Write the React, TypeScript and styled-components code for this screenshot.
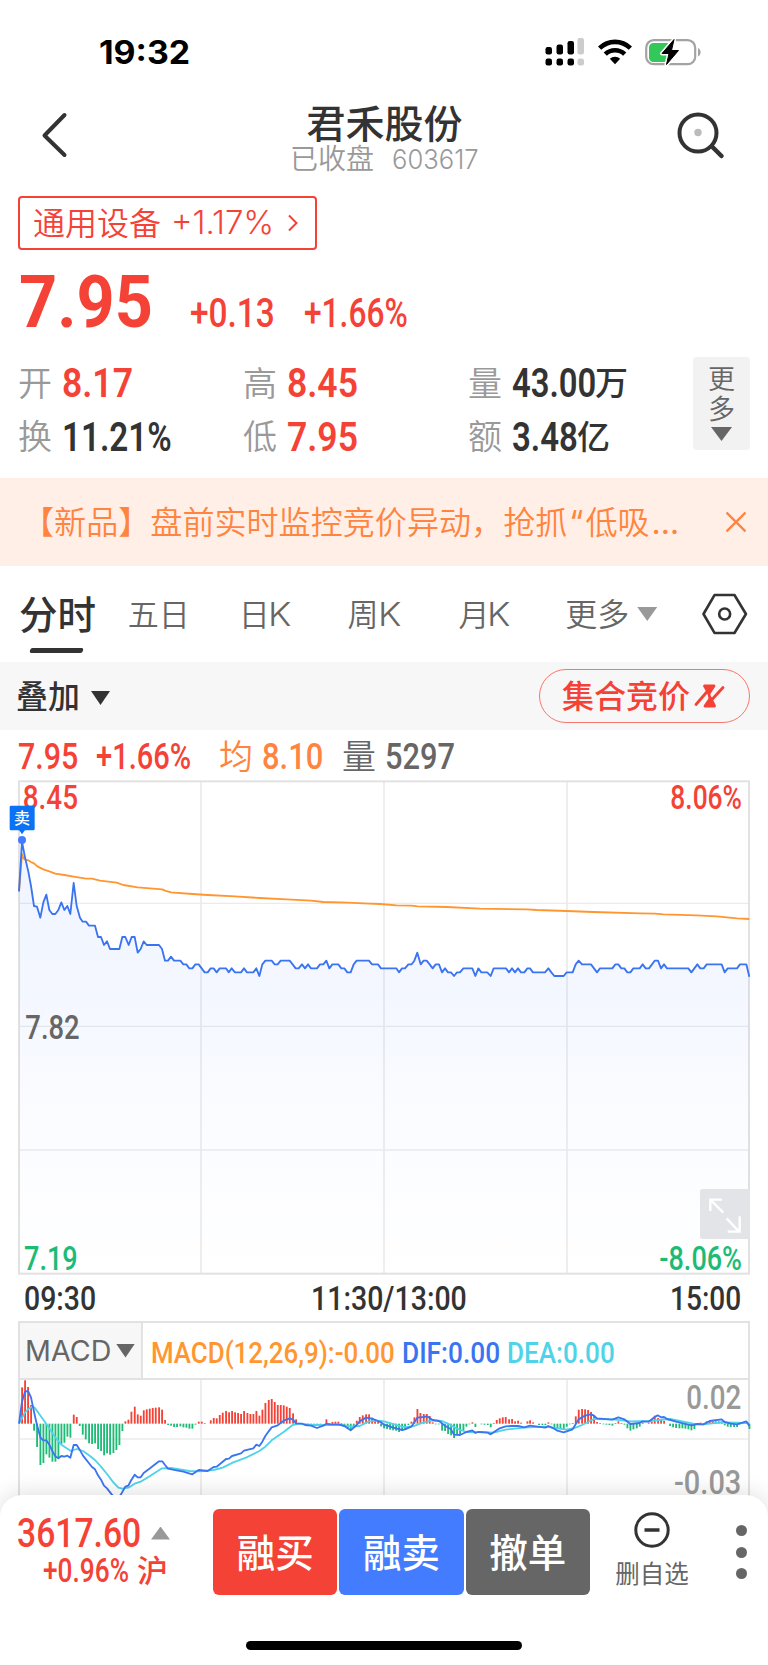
import React, { useLayoutEffect, useRef, useState } from 'react';
import styled, { createGlobalStyle } from 'styled-components';

const RED = '#f54236';
const INK = '#333333';
const GREY = '#999999';
const MID = '#666666';
const BLUE = '#3a74f0';
const ORANGE = '#ff9630';
const CYAN = '#4fd3e8';
const GREEN = '#1dbb75';
const DIN = 'Roboto, "Liberation Sans", sans-serif';
const SYSTEM = 'Inter, "Liberation Sans", sans-serif';
const HAN = '"Noto Sans CJK SC", sans-serif';

const GlobalStyle = createGlobalStyle`
  * { box-sizing: border-box; }
  body { margin: 0; background: #fff; font-family: ${HAN}; }
`;

const Page = styled.div`
  width: 768px;
  height: 1665px;
  overflow: hidden;
  background: #fff;
  display: flex;
  flex-direction: column;
  & > * { flex-shrink: 0; }
`;

/* ---------- text pieces ---------- */

const Han = styled.span<{ $size: number; $color?: string; $weight?: number; $ml?: number }>`
  flex: none;
  font: ${p => p.$weight ?? 400} ${p => p.$size}px/1 ${HAN};
  color: ${p => p.$color ?? INK};
  margin-left: ${p => p.$ml ?? 0}px;
  padding-bottom: 0.11em;
  white-space: nowrap;
`;

const FitBox = styled.span<{ $w: number; $size: number; $color: string; $weight: number; $ml: number; $font: string }>`
  flex: none;
  display: block;
  width: ${p => p.$w}px;
  margin-left: ${p => p.$ml}px;
  font: ${p => p.$weight} ${p => p.$size}px/1 ${p => p.$font};
  color: ${p => p.$color};
  white-space: nowrap;
`;

const FitText = styled.span`
  display: inline-block;
  transform-origin: 0 50%;
`;

type FitProps = { children: string; w: number; size: number; color?: string; weight?: number; ml?: number; font?: string };

/** Condenses a run of figures to the given width. */
function Fit({ children, w, size, color = RED, weight = 500, ml = 0, font = DIN }: FitProps) {
  const ref = useRef<HTMLSpanElement>(null);
  const [scale, setScale] = useState(1);
  useLayoutEffect(() => {
    if (ref.current) setScale(w / ref.current.offsetWidth);
  }, [w, children]);
  return (
    <FitBox $w={w} $size={size} $color={color} $weight={weight} $ml={ml} $font={font}>
      <FitText ref={ref} style={{ transform: `scaleX(${scale})` }}>{children}</FitText>
    </FitBox>
  );
}

const Triangle = styled.i<{ $w: number; $h: number; $color: string; $up?: boolean; $ml?: number }>`
  flex: none;
  width: ${p => p.$w}px;
  height: ${p => p.$h}px;
  margin-left: ${p => p.$ml ?? 0}px;
  background: ${p => p.$color};
  clip-path: ${p => (p.$up ? 'polygon(50% 0, 100% 100%, 0 100%)' : 'polygon(0 0, 100% 0, 50% 100%)')};
`;

/* ---------- top ---------- */

const StatusBar = styled.div`
  height: 96px;
  padding: 10px 67px 0 99px;
  display: flex;
  align-items: center;
  justify-content: space-between;
`;

const StatusIcons = styled.div`
  display: flex;
  align-items: center;
  gap: 13px;
  padding-bottom: 2px;
`;

const Header = styled.header`
  height: 100px;
  padding: 6px 43px 0 39px;
  display: flex;
  justify-content: space-between;
`;

const Titles = styled.div`
  display: flex;
  flex-direction: column;
  align-items: center;
  margin-left: 25px;
`;

const SubTitle = styled.div`
  display: flex;
  align-items: center;
  height: 29px;
  margin-top: -1px;
`;

const HeaderIcon = styled.svg`
  margin-top: 7px;
`;

const SectorTag = styled.div`
  flex: none;
  width: 299px;
  height: 54px;
  margin-left: 18px;
  padding-left: 13px;
  border: 2px solid ${RED};
  border-radius: 4px;
  display: flex;
  align-items: center;
`;

const PriceRow = styled.div`
  height: 107px;
  padding: 17px 0 0 19px;
  display: flex;
  align-items: baseline;
`;

const Quote = styled.section`
  height: 121px;
  padding: 0 18px 0 18px;
  display: flex;
  justify-content: space-between;
`;

const Stats = styled.div`
  display: grid;
  grid-template-columns: 225px 225px 200px;
  grid-template-rows: 53px 54px;
`;

const Stat = styled.div`
  display: flex;
  align-items: center;
`;

const MoreBox = styled.div`
  width: 57px;
  height: 93px;
  background: #f2f2f2;
  border-radius: 4px;
  display: flex;
  flex-direction: column;
  align-items: center;
  padding-top: 7px;
`;

const MoreArrow = styled(Triangle)`
  margin-top: 3px;
`;

const Banner = styled.div`
  height: 88px;
  padding: 0 22px;
  background: #ffefe6;
  display: flex;
  align-items: center;
  justify-content: space-between;
`;

const BannerText = styled.span`
  font: 350 32.1px/1 ${HAN};
  color: #ff8440;
  white-space: nowrap;
  padding-bottom: 2px;
  b {
    font: 400 32px/1 ${SYSTEM};
    margin: 0 2px;
  }
`;

/* ---------- tabs ---------- */

const Tabs = styled.nav`
  height: 96px;
  padding: 0 20px 0 19px;
  display: flex;
  align-items: center;
`;

const Tab = styled.div<{ $x: number }>`
  display: flex;
  align-items: center;
  height: 96px;
  width: ${p => p.$x}px;
`;

const ActiveTab = styled(Tab)`
  flex-direction: column;
  align-items: flex-start;
  padding-top: 27px;
`;

const Underline = styled.i`
  width: 53px;
  height: 5px;
  margin: 12px 0 0 11px;
  background: ${INK};
  border-radius: 2px;
  transform: skewX(-15deg);
`;

const OverlayBar = styled.div`
  height: 68px;
  background: #f7f7f7;
  padding: 0 18px 0 16px;
  display: flex;
  align-items: center;
  justify-content: space-between;
`;

const Inline = styled.div`
  display: flex;
  align-items: center;
`;

const OverlayArrow = styled(Triangle)`
  margin-top: 4px;
`;

const AuctionPill = styled.div`
  width: 211px;
  height: 54px;
  border: 1.5px solid #f7776e;
  border-radius: 27px;
  display: flex;
  align-items: center;
  padding-left: 22px;
  gap: 4px;
`;

const InfoRow = styled.div`
  height: 50px;
  padding: 3px 0 0 18px;
  display: flex;
  align-items: center;
`;

/* ---------- charts ---------- */

const ChartSvg = styled.svg`
  display: block;
  flex: none;
`;

const TimeAxis = styled.div`
  height: 45px;
  padding: 0 27px 2px 24px;
  display: flex;
  align-items: center;
`;

const MacdHeader = styled.div`
  height: 58px;
  margin: 0 18px;
  border: 2px solid #e2e2e2;
  border-bottom-width: 1px;
  display: flex;
  align-items: center;
`;

const MacdValues = styled.div`
  display: flex;
  padding-top: 6px;
`;

const IndicatorSelect = styled.div`
  width: 123px;
  height: 55px;
  padding-left: 5px;
  background: #f7f7f7;
  border-right: 2px solid #e2e2e2;
  display: flex;
  align-items: center;
`;

/* ---------- bottom ---------- */

const BottomBar = styled.footer`
  position: relative;
  height: 170px;
  margin-top: -24px;
  background: #fff;
  border-radius: 22px 22px 0 0;
  box-shadow: 0 -2px 22px rgba(0, 0, 0, 0.13);
  display: flex;
  flex-direction: column;
  align-items: center;
  justify-content: space-between;
`;

const Actions = styled.div`
  width: 768px;
  padding: 14px 21px 0 17px;
  display: flex;
`;

const IndexBlock = styled.div`
  width: 196px;
  display: flex;
  flex-direction: column;
`;

const IndexLine = styled.div<{ $h: number; $pt: number }>`
  display: flex;
  align-items: center;
  height: ${p => p.$h}px;
  padding-top: ${p => p.$pt}px;
`;

const Buttons = styled.div`
  display: flex;
  gap: 2px;
`;

const TradeButton = styled.div<{ $bg: string }>`
  width: 124.3px;
  height: 86px;
  border-radius: 6px;
  background: ${p => p.$bg};
  display: flex;
  align-items: center;
  justify-content: center;
`;

const Watch = styled.div`
  width: 74px;
  margin-left: 25px;
  padding-top: 3px;
  display: flex;
  flex-direction: column;
  align-items: center;
  gap: 13px;
`;

const Dots = styled.div`
  margin-left: auto;
  padding-top: 16px;
  display: flex;
  flex-direction: column;
  gap: 10.5px;
  i {
    width: 11px;
    height: 11px;
    border-radius: 50%;
    background: ${MID};
  }
`;

const HomeIndicator = styled.i`
  width: 276px;
  height: 9px;
  margin-bottom: 15px;
  border-radius: 5px;
  background: #000;
`;

/* ---------- data: morning half, then afternoon half (x restarts) ---------- */

const AFTERNOON = 1140;
const series = (am: string, pm: string): [number, number][] => {
  const read = (s: string, dx: number) =>
    s.split(' ').map(p => {
      const [x, y] = p.split(',').map(Number);
      return [x + dx, y] as [number, number];
    });
  return [...read(am, 0), ...read(pm, AFTERNOON)];
};
const points = (s: [number, number][]) => s.map(p => p.join(',')).join(' ');

const price = series(
  '57,334 66,185 75,232 85,275 93,318 102,378 111,380 121,413 130,367 139,344 148,390 157,402 166,402 175,390 184,367 193,390 202,378 211,402 221,309 230,378 240,413 248,425 258,425 267,437 285,437 294,471 303,471 312,495 321,484 330,507 358,507 367,471 376,471 386,495 395,471 404,471 413,518 422,507 431,484 440,495 477,495 486,507 495,542 504,542 513,530 522,542 541,542 550,553 559,553 568,565 577,565 586,553 596,553 605,565 614,577 623,577 632,565 641,565 650,577 659,565 678,565 686,577 695,565 705,577 723,577 732,565 741,577 760,577 769,565 778,588 787,553 796,542 815,542 824,553 833,553 842,542 869,542 878,553 887,565 896,565 906,553 915,565 924,553 933,565 951,565 960,553 970,553 979,542 988,565 997,553 1015,553 1024,565 1033,565 1042,577 1052,577 1061,553 1070,542 1107,542 1116,553 1134,553 1143,565 1189,565',
  '57,577 66,565 75,565 85,553 95,553 103,542 112,518 122,553 131,542 140,542 149,553 158,565 167,553 177,553 186,577 195,565 204,577 213,577 222,588 231,577 240,577 250,565 277,565 286,588 295,565 304,577 322,577 332,588 341,565 378,565 387,577 396,565 405,577 414,565 423,577 433,577 442,565 450,565 459,577 495,577 505,565 514,577 523,588 551,588 560,577 578,577 587,553 596,542 606,553 633,553 642,565 651,577 660,565 697,565 706,553 715,553 724,565 733,565 742,577 751,577 760,565 779,565 788,553 797,565 807,565 816,553 824,542 834,542 843,565 852,553 861,565 925,565 934,577 943,565 952,553 961,565 971,565 980,553 1025,553 1034,577 1043,565 1071,565 1080,553 1099,553 1108,590',
);

const average = series(
  '57,334 66,222 70,235 78,240 85,241 93,246 103,251 112,259 130,268 148,274 166,281 193,285 221,290 258,296 276,296 300,302 350,308 370,315 413,322 487,328 495,332 513,337 577,342 623,345 705,349 778,354 860,358 933,362 970,366 1043,368 1107,371',
  '0,372 50,376 95,377 112,379 200,381 300,386 440,388 470,390 560,393 640,396 780,400 825,401 850,403 950,406 1010,409 1071,415 1108,417',
);

const bars = series(
  '66,232 75,211 84,231 93,285 102,362 111,411 121,465 130,459 139,433 148,443 157,455 166,455 175,445 184,403 193,398 202,380 211,383 221,314 230,321 239,348 248,374 257,388 267,400 276,402 285,400 294,417 303,423 312,436 321,430 330,434 340,429 349,420 358,405 367,363 376,334 385,329 394,305 404,290 413,313 422,317 431,301 440,298 449,296 458,294 467,293 477,292 486,299 495,330 504,345 513,347 522,351 531,351 541,349 550,352 559,353 568,356 577,356 586,344 596,335 605,335 614,340 632,331 641,324 650,325 659,315 668,308 678,303 687,307 696,303 705,307 714,309 723,312 732,303 742,309 751,312 760,312 769,303 778,317 787,299 796,279 806,270 815,267 824,276 833,285 842,285 851,286 860,290 869,294 879,310 888,328 906,342 915,344 924,345 933,347 942,347 951,348 961,346 979,328 988,339 997,336 1006,335 1015,335 1024,340 1033,346 1043,354 1052,360 1061,354 1070,332 1079,321 1088,316 1098,313 1107,313 1116,323 1125,328 1134,334 1143,349',
  '12,355 21,357 30,359 39,361 48,362 57,366 66,361 75,358 85,345 94,335 103,322 112,297 121,309 131,312 140,312 149,318 158,337 167,343 176,343 186,362 195,363 204,372 213,376 222,384 231,373 240,374 250,362 259,350 268,342 277,337 286,351 304,343 313,344 323,345 332,352 341,340 350,330 359,325 368,322 377,321 387,328 396,327 405,334 414,332 423,338 442,334 450,331 459,337 477,345 487,345 496,345 505,337 514,343 523,352 532,356 541,357 551,357 560,350 569,342 578,339 587,319 596,299 606,297 615,298 624,300 633,306 642,317 651,336 660,339 670,342 679,344 688,345 697,347 706,339 715,334 724,340 733,344 742,355 751,362 760,358 770,355 779,350 788,338 806,338 815,334 824,317 834,324 843,328 852,333 870,348 879,352 888,354 898,355 907,355 916,356 925,358 934,361 943,357 961,338 980,334 989,334 998,334 1007,334 1016,334 1025,334 1034,346 1043,350 1052,351 1062,351 1071,351 1080,343 1090,339 1099,339 1108,357',
);

const dif = series(
  '57,341 66,275 75,245 84,243 93,262 103,310 111,345 121,382 130,391 139,391 148,404 157,423 166,439 175,445 184,438 193,440 202,437 211,443 221,405 230,405 239,419 249,437 276,471 285,478 294,496 303,509 312,527 321,535 335,553 350,572 363,553 376,530 385,527 394,510 404,494 413,502 422,502 431,489 450,475 477,454 487,454 495,465 504,476 530,481 550,485 577,493 596,480 623,483 641,471 650,470 678,447 687,446 696,438 723,430 732,422 760,415 769,404 778,408 787,395 796,378 806,364 815,352 833,346 851,332 869,325 879,329 888,340 906,341 915,345 933,347 951,354 970,347 979,341 988,343 1015,343 1033,348 1052,361 1070,345 1079,334 1098,323 1116,326 1134,333',
  '3,337 12,344 40,353 66,360 75,358 95,349 103,337 112,323 131,321 141,319 158,330 177,333 195,347 213,358 222,374 240,375 259,366 277,361 286,369 295,366 323,368 332,373 341,367 359,355 377,349 396,348 414,348 433,352 450,347 496,353 505,348 523,356 532,362 551,367 578,358 587,343 596,328 615,317 633,313 642,317 651,325 697,329 715,322 733,328 751,342 779,339 788,334 806,335 824,321 833,316 843,322 852,321 861,327 888,335 934,346 952,342 970,343 989,333 1025,328 1034,336 1052,341 1071,343 1099,334 1108,348',
);

const dea = series(
  '57,341 75,308 85,297 97,290 103,292 115,308 139,342 166,382 184,404 200,415 213,423 230,417 249,423 267,436 285,450 303,470 321,492 340,517 355,533 367,536 385,533 404,521 422,515 450,498 486,475 513,474 568,483 600,484 641,480 668,473 700,457 740,442 778,423 796,410 815,391 851,366 878,345 897,341 933,345 979,345 1024,345 1052,350 1079,348 1107,334 1134,332',
  '12,334 66,350 85,351 105,347 130,337 158,331 186,333 204,341 231,356 259,366 304,366 340,368 377,359 433,353 496,350 532,355 560,359 587,353 606,345 642,327 700,328 751,334 806,333 870,327 940,341 970,343 1025,337 1071,338 1108,340',
);

/* ---------- chart drawings ---------- */

type LabelProps = { x: number; y: number; w: number; color: string; children: string };
const ChartLabel = ({ x, y, w, color, children }: LabelProps) => (
  <text x={x} y={y} textLength={w} lengthAdjust="spacingAndGlyphs" fill={color} fontFamily={DIN} fontSize={99} fontWeight={500}>
    {children}
  </text>
);

const columns = [603, 1152, 1701];

function PriceChart() {
  return (
    <ChartSvg width="768" height="496" viewBox="0 0 2304 1488">
      <defs>
        <linearGradient id="area" gradientUnits="userSpaceOnUse" x1="0" y1="200" x2="0" y2="1480">
          <stop offset="0" stopColor="#447cff" stopOpacity="0.08" />
          <stop offset="0.35" stopColor="#447cff" stopOpacity="0.06" />
          <stop offset="0.6" stopColor="#447cff" stopOpacity="0.028" />
          <stop offset="1" stopColor="#447cff" stopOpacity="0" />
        </linearGradient>
      </defs>
      <g stroke="#ebebeb" strokeWidth="5">
        {columns.map(x => <line key={x} x1={x} x2={x} y1="3" y2="1481" />)}
        {[370, 739, 1110].map(y => <line key={y} x1="57" x2="2247" y1={y} y2={y} strokeWidth="4" />)}
      </g>
      <rect x="57" y="4" width="2190" height="1477" fill="none" stroke="#e2e2e2" strokeWidth="6" />
      <polygon points={`57,1481 ${points(price)} 2248,1481`} fill="url(#area)" />
      <polyline points={points(average)} fill="none" stroke={ORANGE} strokeWidth="5.5" strokeLinejoin="round" />
      <polyline points={points(price)} fill="none" stroke={BLUE} strokeWidth="5.5" strokeLinejoin="round" />
      <ChartLabel x={68} y={86} w={166} color={RED}>8.45</ChartLabel>
      <ChartLabel x={2011} y={86} w={215} color={RED}>8.06%</ChartLabel>
      <ChartLabel x={76} y={777} w={163} color={MID}>7.82</ChartLabel>
      <ChartLabel x={72} y={1469} w={161} color={GREEN}>7.19</ChartLabel>
      <ChartLabel x={1978} y={1469} w={248} color={GREEN}>-8.06%</ChartLabel>
      <g>
        <rect x="29" y="77" width="75" height="74" rx="4" fill="#0a73f5" />
        <path d="M57 150h18l-9 13z" fill="#0a73f5" />
        <text x="66" y="132" textAnchor="middle" fontFamily={HAN} fontSize="48" fontWeight="500" fill="#fff">卖</text>
        <circle cx="66" cy="180" r="12" fill="#447cff" />
      </g>
      <g>
        <rect x="2100" y="1227" width="150" height="150" rx="8" fill="#e3e4e7" />
        <path d="M2131 1293v-34h35M2133 1261l37 37M2219 1309v46h-36M2217 1355l-37-40" fill="none" stroke="#fff" strokeWidth="7" />
      </g>
    </ChartSvg>
  );
}

function MacdChart() {
  return (
    <ChartSvg width="768" height="140" viewBox="0 207 2304 420">
      <g stroke="#ebebeb" strokeWidth="5">
        {columns.map(x => <line key={x} x1={x} x2={x} y1="205" y2="628" />)}
        <line x1="57" x2="2247" y1="387" y2="387" />
      </g>
      <g stroke="#e2e2e2" strokeWidth="6">
        <line x1="57" x2="57" y1="205" y2="628" />
        <line x1="2247" x2="2247" y1="205" y2="628" />
        <line x1="54" x2="2250" y1="207" y2="207" />
      </g>
      {bars.map(([x, y]) => (
        <rect key={x} x={x - 2.5} width="5.5" y={Math.min(341, y)} height={Math.max(2, Math.abs(y - 341))} fill={y < 341 ? RED : GREEN} />
      ))}
      <polyline points={points(dea)} fill="none" stroke={CYAN} strokeWidth="5.5" strokeLinejoin="round" />
      <polyline points={points(dif)} fill="none" stroke={BLUE} strokeWidth="5.5" strokeLinejoin="round" />
      <ChartLabel x={2059} y={298} w={165} color={GREY}>0.02</ChartLabel>
      <ChartLabel x={2022} y={552} w={202} color={GREY}>-0.03</ChartLabel>
    </ChartSvg>
  );
}

/* ---------- icons ---------- */

const Signal = () => (
  <svg width="40" height="28" viewBox="0 0 40 28">
    {[[0, 9], [11, 6.5], [22, 3]].map(([x, y]) => (
      <g key={x}>
        <rect x={x + 0.5} y={y} width="6.5" height={16.500 - y} rx="2.2" />
        <rect x={x + 0.5} y="20.5" width="6.5" height="7" rx="2.2" />
      </g>
    ))}
    <g fill="#ccc">
      <rect x="32.5" y="0" width="6.5" height="16.5" rx="2.2" />
      <rect x="32.5" y="20.5" width="6.5" height="7" rx="2.2" />
    </g>
  </svg>
);

const Wifi = () => (
  <svg width="34" height="26" viewBox="0 0 34 26">
    <g fill="none" stroke="#000" strokeWidth="4.6">
      <path d="M1.6 9.2a22 22 0 0 1 30.8 0" />
      <path d="M7.3 15.2a14 14 0 0 1 19.4 0" />
    </g>
    <path d="M17 25.2l-5.2-5.4a7.4 7.4 0 0 1 10.4 0z" />
  </svg>
);

const Battery = () => (
  <svg width="56" height="28" viewBox="0 0 56 28">
    <rect x="1.2" y="2.2" width="49" height="24" rx="7.5" fill="none" stroke="#a3a3a3" strokeWidth="2.2" />
    <path d="M53 10v8.500c3.500-1.400 3.500-7.100 0-8.500z" fill="#a3a3a3" />
    <path d="M8.500 5H23v19H8.500A4.500 4.500 0 0 1 4 19.500v-10A4.500 4.500 0 0 1 8.500 5z" fill="#34c759" />
    <path d="M29 1.500L17 15.500h7L21.500 26.500 33.500 12.500h-7z" stroke="#fff" strokeWidth="4" strokeLinejoin="round" />
    <path d="M29 1.500L17 15.500h7L21.500 26.500 33.500 12.500h-7z" stroke="#000" strokeWidth="1" strokeLinejoin="round" />
  </svg>
);

const stats = [
  { label: '开', value: '8.17', w: 71, color: RED },
  { label: '高', value: '8.45', w: 71, color: RED },
  { label: '量', value: '43.00', w: 84, color: INK, unit: '万' },
  { label: '换', value: '11.21%', w: 110, color: INK },
  { label: '低', value: '7.95', w: 71, color: RED },
  { label: '额', value: '3.48', w: 66, color: INK, unit: '亿' },
];

export default function App() {
  return (
    <Page>
      <GlobalStyle />
      <StatusBar>
        <Fit w={91} size={32} weight={700} color="#000" font={SYSTEM}>19:32</Fit>
        <StatusIcons><Signal /><Wifi /><Battery /></StatusIcons>
      </StatusBar>

      <Header>
        <HeaderIcon width="30" height="52" viewBox="0 0 30 52">
          <path d="M25.500 6L5.500 26.500 25.500 46" fill="none" stroke={INK} strokeWidth="4" strokeLinecap="round" strokeLinejoin="round" />
        </HeaderIcon>
        <Titles>
          <Han $size={39} $weight={500}>君禾股份</Han>
          <SubTitle>
            <Han $size={28} $color={GREY} $weight={350}>已收盘</Han>
            <Fit w={87} size={26.5} weight={350} color={GREY} font={SYSTEM} ml={18}>603617</Fit>
          </SubTitle>
        </Titles>
        <HeaderIcon width="50" height="52" viewBox="0 0 50 52">
          <circle cx="23" cy="24" r="18.500" fill="none" stroke={INK} strokeWidth="4" />
          <path d="M37 37.500l9.500 9.500" stroke={INK} strokeWidth="4.500" strokeLinecap="round" />
          <circle cx="23" cy="23.500" r="3.700" fill="#bbb" />
        </HeaderIcon>
      </Header>

      <SectorTag>
        <Han $size={32} $color={RED} $weight={350}>通用设备</Han>
        <Fit w={103} size={32} weight={350} font={SYSTEM} ml={10}>+1.17%</Fit>
        <svg width="30" height="20" viewBox="0 0 30 20">
          <path d="M15 2.500l7.500 7.500-7.500 7.500" fill="none" stroke={RED} strokeWidth="2" />
        </svg>
      </SectorTag>

      <PriceRow>
        <Fit w={134} size={72} weight={700}>7.95</Fit>
        <Fit w={85} size={40.500} ml={37}>+0.13</Fit>
        <Fit w={104} size={40.500} ml={29}>+1.66%</Fit>
      </PriceRow>

      <Quote>
        <Stats>
          {stats.map(s => (
            <Stat key={s.label}>
              <Han $size={34} $color={GREY} $weight={350}>{s.label}</Han>
              <Fit w={s.w} size={41} weight={600} color={s.color} ml={10}>{s.value}</Fit>
              {s.unit && <Han $size={33} $weight={500} $ml={-1}>{s.unit}</Han>}
            </Stat>
          ))}
        </Stats>
        <MoreBox>
          <Han $size={27} $color={MID} $weight={350}>更</Han>
          <Han $size={27} $color={MID} $weight={350}>多</Han>
          <MoreArrow $w={21} $h={14} $color={MID} />
        </MoreBox>
      </Quote>

      <Banner>
        <BannerText>【新品】盘前实时监控竞价异动，抢抓<b>“</b>低吸<b>…</b></BannerText>
        <svg width="20" height="20" viewBox="0 0 20 20">
          <path d="M0.500 0.500l19 19M19.500 0.500l-19 19" stroke="#ff8440" strokeWidth="2.300" />
        </svg>
      </Banner>

      <Tabs>
        <ActiveTab $x={109}>
          <Han $size={38.500} $weight={500}>分时</Han>
          <Underline />
        </ActiveTab>
        <Tab $x={111}><Han $size={31} $color={MID} $weight={350}>五日</Han></Tab>
        <Tab $x={109}>
          <Han $size={31} $color={MID} $weight={350}>日</Han>
          <Fit w={23} size={33} weight={350} color={MID} font={SYSTEM} ml={-2}>K</Fit>
        </Tab>
        <Tab $x={111}>
          <Han $size={31} $color={MID} $weight={350}>周</Han>
          <Fit w={23} size={33} weight={350} color={MID} font={SYSTEM} ml={-1}>K</Fit>
        </Tab>
        <Tab $x={107}>
          <Han $size={31} $color={MID} $weight={350}>月</Han>
          <Fit w={23} size={33} weight={350} color={MID} font={SYSTEM} ml={-2}>K</Fit>
        </Tab>
        <Tab $x={137}>
          <Han $size={32} $color={MID} $weight={350}>更多</Han>
          <Triangle $w={20} $h={14} $color={GREY} $ml={8} />
        </Tab>
        <svg width="46" height="42" viewBox="0 0 46 42">
          <path d="M12.500 2h20L44 21 32.500 40h-20L1.500 21z" fill="none" stroke={INK} strokeWidth="2.600" strokeLinejoin="round" />
          <circle cx="22.700" cy="21" r="5.500" fill="none" stroke={INK} strokeWidth="2.600" />
        </svg>
      </Tabs>

      <OverlayBar>
        <Inline>
          <Han $size={32} $weight={500}>叠加</Han>
          <OverlayArrow $w={19} $h={14} $color={INK} $ml={11} />
        </Inline>
        <AuctionPill>
          <Han $size={32} $color={RED} $weight={500}>集合竞价</Han>
          <svg width="32" height="26" viewBox="0 0 32 26">
            <g stroke={RED} strokeWidth="2.800" strokeLinecap="round" strokeLinejoin="round">
              <path d="M2 21.500L17.500 3.500M13 22L29 4.500" fill="none" />
              <path d="M10.500 3h9.500l-5 7.500z" fill={RED} />
              <path d="M11 23h9.500l-4-8z" fill={RED} />
              <path d="M14 7.500l2.500 10" fill="none" />
            </g>
          </svg>
        </AuctionPill>
      </OverlayBar>

      <InfoRow>
        <Fit w={60} size={37}>7.95</Fit>
        <Fit w={95} size={37} ml={18}>+1.66%</Fit>
        <Han $size={34} $color="#ff8440" $weight={350} $ml={28}>均</Han>
        <Fit w={61} size={37} color="#ff8440" ml={9}>8.10</Fit>
        <Han $size={34} $color={MID} $weight={350} $ml={19}>量</Han>
        <Fit w={70} size={37} color={MID} ml={9}>5297</Fit>
      </InfoRow>

      <PriceChart />

      <TimeAxis>
        <Fit w={72} size={34} color={INK}>09:30</Fit>
        <Fit w={156} size={34} color={INK} ml={215}>11:30/13:00</Fit>
        <Fit w={71} size={34} color={INK} ml={203}>15:00</Fit>
      </TimeAxis>

      <MacdHeader>
        <IndicatorSelect>
          <Fit w={86} size={28} weight={400} color={MID} font={SYSTEM}>MACD</Fit>
          <Triangle $w={19} $h={14} $color={MID} $ml={5} />
        </IndicatorSelect>
        <MacdValues>
          <Fit w={244} size={29.500} color={ORANGE} ml={8}>MACD(12,26,9):-0.00</Fit>
          <Fit w={98} size={29.500} color={BLUE} ml={7}>DIF:0.00</Fit>
          <Fit w={108} size={29.500} color={CYAN} ml={7}>DEA:0.00</Fit>
        </MacdValues>
      </MacdHeader>
      <MacdChart />

      <BottomBar>
        <Actions>
          <IndexBlock>
            <IndexLine $h={42} $pt={6}>
              <Fit w={124} size={41}>3617.60</Fit>
              <Triangle $w={19} $h={13} $color={GREY} $up $ml={10} />
            </IndexLine>
            <IndexLine $h={36} $pt={2}>
              <Fit w={86} size={33} ml={26}>+0.96%</Fit>
              <Han $size={31} $color={RED} $weight={500} $ml={8}>沪</Han>
            </IndexLine>
          </IndexBlock>
          <Buttons>
            <TradeButton $bg={RED}><Han $size={38.500} $color="#fff" $weight={500}>融买</Han></TradeButton>
            <TradeButton $bg="#447cff"><Han $size={38.500} $color="#fff" $weight={500}>融卖</Han></TradeButton>
            <TradeButton $bg={MID}><Han $size={38.500} $color="#fff" $weight={500}>撤单</Han></TradeButton>
          </Buttons>
          <Watch>
            <svg width="36" height="36" viewBox="0 0 36 36">
              <circle cx="18" cy="18" r="16.200" fill="none" stroke={INK} strokeWidth="3" />
              <path d="M10.500 18h15" stroke={INK} strokeWidth="3.500" />
            </svg>
            <Han $size={24.500} $color={MID}>删自选</Han>
          </Watch>
          <Dots><i /><i /><i /></Dots>
        </Actions>
        <HomeIndicator />
      </BottomBar>
    </Page>
  );
}
